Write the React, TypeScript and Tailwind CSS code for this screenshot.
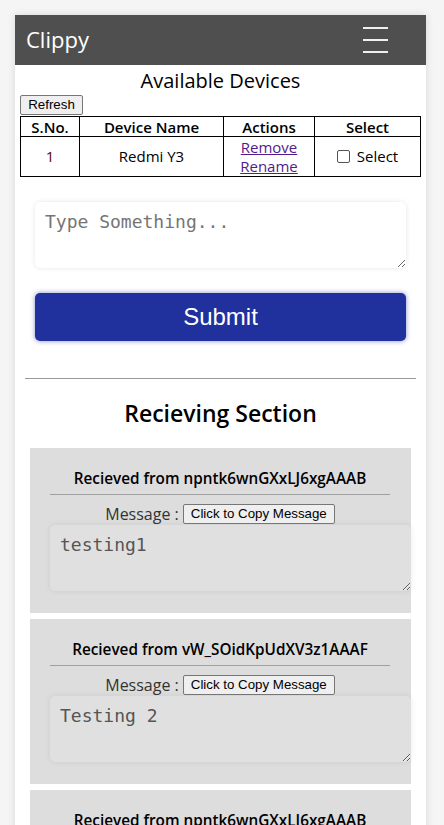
import React from "react";

const ff = { fontFamily: "'Open Sans', 'Noto Sans', sans-serif" };
const arial = { fontFamily: "'Liberation Sans', Arial, sans-serif" };
const mono = { fontFamily: "'DejaVu Sans Mono', 'Liberation Mono', monospace" };

function ReceivedCard({ from, msg }: { from: string; msg: string }) {
  return (
    <div className="bg-[#dddddd] px-[20px] pt-[19px] pb-[22px] mb-[6px]">
      <div className="w-[340px] text-center text-[15.3px] font-semibold leading-[22px] text-black pb-[5px] border-b border-[#a0a0a0]">
        Recieved from {from}
      </div>
      <div className="flex items-center justify-center w-[340px] h-[20px] mt-[9px] text-[16px] text-[#333]">
        <span className="mr-[4px]">Message :</span>
        <button className="h-[20px] px-[7px] border border-[#767676] rounded-[2px] bg-[#efefef] text-[13.3px] text-black leading-none" style={arial}>
          Click to Copy Message
        </button>
      </div>
      <textarea
        readOnly
        value={msg}
        className="block w-[361px] h-[66px] mt-[1px] rounded-[5px] bg-[#e0e0e0] px-[10px] py-[8px] text-[18px] leading-[24px] text-[#555] outline-none shadow-[0_0_6px_rgba(0,0,0,0.08)] resize-y"
        style={mono}
      />
    </div>
  );
}

export default function App() {
  return (
    <div className="h-[825px] bg-[#f5f5f5] pt-[15px] overflow-hidden" style={ff}>
      <div className="ml-[15px] w-[411px] bg-white shadow-[0_0_8px_rgba(0,0,0,0.12)] min-h-[810px]">
        <div className="h-[50px] bg-[#4f4f4f] flex items-center justify-between pl-[11px] pr-[38px]">
          <span className="text-white text-[22px] leading-none pb-[3px]">Clippy</span>
          <div className="flex flex-col gap-[10px]">
            <div className="w-[25px] h-[2px] bg-[#f0f0f0]" />
            <div className="w-[25px] h-[2px] bg-[#f0f0f0]" />
            <div className="w-[25px] h-[2px] bg-[#f0f0f0]" />
          </div>
        </div>
        <div className="text-center text-[20px] leading-[28px] text-black pt-[2px]">Available Devices</div>
        <div className="flex items-start pl-[5px] h-[21px]">
          <button className="h-[20px] w-[63px] border border-[#767676] rounded-[2px] bg-[#efefef] text-[13.3px] text-black leading-none" style={arial}>
            Refresh
          </button>
        </div>
        <table className="ml-[5px] w-[400px] border-collapse text-[15px] text-black table-fixed">
          <colgroup>
            <col className="w-[59px]" />
            <col className="w-[144px]" />
            <col className="w-[91px]" />
            <col className="w-[106px]" />
          </colgroup>
          <thead>
            <tr className="h-[20px]">
              <th className="border border-black font-semibold leading-[18px] p-0">S.No.</th>
              <th className="border border-black font-semibold leading-[18px] p-0">Device Name</th>
              <th className="border border-black font-semibold leading-[18px] p-0">Actions</th>
              <th className="border border-black font-semibold leading-[18px] p-0">Select</th>
            </tr>
          </thead>
          <tbody>
            <tr className="h-[40px]">
              <td className="border border-black text-center p-0 text-[#5a0a0a]">1</td>
              <td className="border border-black text-center p-0">Redmi Y3</td>
              <td className="border border-black text-center p-0 leading-[19px]">
                <a href="#" className="text-[#551a8b] underline block">Remove</a>
                <a href="#" className="text-[#551a8b] underline block">Rename</a>
              </td>
              <td className="border border-black text-center p-0">
                <label className="inline-flex items-center gap-[7px]">
                  <span className="inline-block w-[13px] h-[13px] border border-[#555] rounded-[2px] bg-white" />
                  Select
                </label>
              </td>
            </tr>
          </tbody>
        </table>
        <div className="px-[20px] pt-[25px]">
          <textarea
            placeholder="Type Something..."
            className="block w-[371px] h-[66px] rounded-[5px] bg-white px-[10px] py-[8px] text-[18px] leading-[24px] placeholder-[#757575] outline-none shadow-[0_0_5px_rgba(0,0,0,0.1)] resize-y"
            style={mono}
          />
          <button
            className="block mt-[25px] w-[371px] h-[48px] rounded-[5px] bg-[#20309d] text-white text-[24px] shadow-[0_0_5px_rgba(32,48,157,0.55)]"
            style={arial}
          >
            Submit
          </button>
        </div>
        <div className="mx-[10px] mt-[37px] border-t border-[#999]" />
        <div className="text-center text-[23px] font-semibold leading-[32px] text-black mt-[18px]">Recieving Section</div>
        <div className="px-[15px] mt-[19px]">
          <ReceivedCard from="npntk6wnGXxLJ6xgAAAB" msg="testing1" />
          <ReceivedCard from="vW_SOidKpUdXV3z1AAAF" msg="Testing 2" />
          <ReceivedCard from="npntk6wnGXxLJ6xgAAAB" msg="testing3" />
        </div>
      </div>
    </div>
  );
}
